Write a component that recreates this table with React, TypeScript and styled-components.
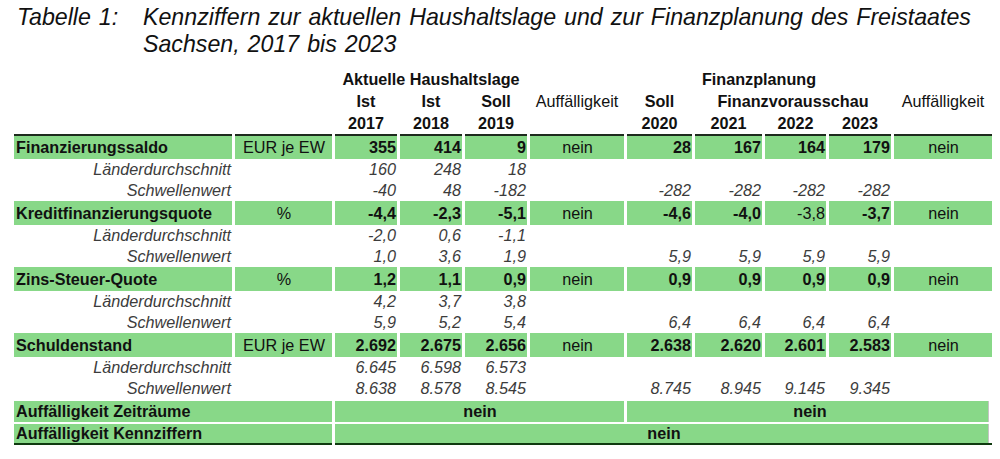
import styled, { createGlobalStyle } from 'styled-components';

const GlobalStyle = createGlobalStyle`
  html, body {
    margin: 0;
    background: #fff;
  }
  body {
    font-family: "Liberation Sans", Arial, sans-serif;
    color: #111;
  }
`;

const GREEN = '#88d888';

type Group = {
  name: string;
  unit: string;
  actual: string[];
  plan: string[];
  thinPlan?: number[];
  avg: string[];
  limit: string[];
  limitPlan: string[];
};

const groups: Group[] = [
  {
    name: 'Finanzierungssaldo',
    unit: 'EUR je EW',
    actual: ['355', '414', '9'],
    plan: ['28', '167', '164', '179'],
    avg: ['160', '248', '18'],
    limit: ['-40', '48', '-182'],
    limitPlan: ['-282', '-282', '-282', '-282'],
  },
  {
    name: 'Kreditfinanzierungsquote',
    unit: '%',
    actual: ['-4,4', '-2,3', '-5,1'],
    plan: ['-4,6', '-4,0', '-3,8', '-3,7'],
    thinPlan: [2],
    avg: ['-2,0', '0,6', '-1,1'],
    limit: ['1,0', '3,6', '1,9'],
    limitPlan: ['5,9', '5,9', '5,9', '5,9'],
  },
  {
    name: 'Zins-Steuer-Quote',
    unit: '%',
    actual: ['1,2', '1,1', '0,9'],
    plan: ['0,9', '0,9', '0,9', '0,9'],
    avg: ['4,2', '3,7', '3,8'],
    limit: ['5,9', '5,2', '5,4'],
    limitPlan: ['6,4', '6,4', '6,4', '6,4'],
  },
  {
    name: 'Schuldenstand',
    unit: 'EUR je EW',
    actual: ['2.692', '2.675', '2.656'],
    plan: ['2.638', '2.620', '2.601', '2.583'],
    avg: ['6.645', '6.598', '6.573'],
    limit: ['8.638', '8.578', '8.545'],
    limitPlan: ['8.745', '8.945', '9.145', '9.345'],
  },
];

const colWidths = [218, 97, 62, 62, 62, 94, 65, 67, 61, 62, 98];

const Page = styled.div`
  width: 1000px;
  height: 459px;
  overflow: hidden;
`;

const Title = styled.div`
  display: grid;
  grid-template-columns: 126px 1fr;
  padding: 4px 0 0 17px;
  font-size: 23.2px;
  line-height: 27px;
  word-spacing: 1.5px;
  font-style: italic;
  color: #111;
`;

const Table = styled.table`
  margin: 10px 0 0 11px;
  border-collapse: separate;
  border-spacing: 3px 0;
  table-layout: fixed;
  font-size: 16.2px;
`;

const HeadCell = styled.th<{ $bold?: boolean }>`
  height: 22px;
  padding: 0;
  line-height: 22px;
  text-align: center;
  white-space: nowrap;
  font-weight: ${p => (p.$bold ? 700 : 400)};
  color: #111;
`;

const MainRow = styled.tr<{ $first?: boolean }>`
  td {
    height: ${p => (p.$first ? 23 : 24)}px;
    line-height: ${p => (p.$first ? 23 : 24)}px;
    background: ${GREEN};
    border-top: ${p => (p.$first ? '2px solid #1d2b1d' : 'none')};
  }
`;

const SubRow = styled.tr`
  td {
    height: 21px;
    line-height: 21px;
    font-style: italic;
    color: #3c3c3c;
  }
`;

const SumRow = styled.tr<{ $last?: boolean }>`
  td {
    height: ${p => (p.$last ? 19 : 21)}px;
    line-height: ${p => (p.$last ? 19 : 21)}px;
    background: ${GREEN};
    border-top: 2px solid #fff;
    border-bottom: ${p => (p.$last ? '2px solid #0f3a0f' : 'none')};
    font-weight: 700;
  }
`;

const Cell = styled.td<{ $align?: 'left' | 'right' | 'center'; $bold?: boolean; $edge?: boolean }>`
  padding: 0 1px 0 2px;
  white-space: nowrap;
  text-align: ${p => p.$align ?? 'right'};
  font-weight: ${p => (p.$bold ? 700 : 400)};
  ${p => (p.$edge ? 'box-shadow: inset -3px 0 0 #fff, inset -4px 0 0 #c4c4c4;' : '')}
`;

const SumCell = styled(Cell)`
  && {
    font-weight: 700;
  }
`;

function GroupRows({ g, first }: { g: Group; first: boolean }) {
  return (
    <>
      <MainRow $first={first}>
        <Cell $align="left" $bold>{g.name}</Cell>
        <Cell $align="center">{g.unit}</Cell>
        {g.actual.map((v, i) => (
          <Cell key={i} $bold>{v}</Cell>
        ))}
        <Cell $align="center">nein</Cell>
        {g.plan.map((v, i) => (
          <Cell key={i} $bold={!g.thinPlan?.includes(i)}>{v}</Cell>
        ))}
        <Cell $align="center">nein</Cell>
      </MainRow>
      <SubRow>
        <Cell>Länderdurchschnitt</Cell>
        <Cell />
        {g.avg.map((v, i) => (
          <Cell key={i}>{v}</Cell>
        ))}
        <Cell />
        <Cell />
        <Cell />
        <Cell />
        <Cell />
        <Cell />
      </SubRow>
      <SubRow>
        <Cell>Schwellenwert</Cell>
        <Cell />
        {g.limit.map((v, i) => (
          <Cell key={i}>{v}</Cell>
        ))}
        <Cell />
        {g.limitPlan.map((v, i) => (
          <Cell key={i}>{v}</Cell>
        ))}
        <Cell />
      </SubRow>
    </>
  );
}

export default function App() {
  return (
    <Page>
      <GlobalStyle />
      <Title>
        <span>Tabelle 1:</span>
        <span>
          Kennziffern zur aktuellen Haushaltslage und zur Finanzplanung des Freistaates Sachsen, 2017 bis 2023
        </span>
      </Title>
      <Table>
        <colgroup>
          {colWidths.map((w, i) => (
            <col key={i} style={{ width: w }} />
          ))}
        </colgroup>
        <thead>
          <tr>
            <HeadCell />
            <HeadCell />
            <HeadCell colSpan={3} $bold>Aktuelle Haushaltslage</HeadCell>
            <HeadCell />
            <HeadCell colSpan={4} $bold>Finanzplanung</HeadCell>
            <HeadCell />
          </tr>
          <tr>
            <HeadCell />
            <HeadCell />
            <HeadCell $bold>Ist</HeadCell>
            <HeadCell $bold>Ist</HeadCell>
            <HeadCell $bold>Soll</HeadCell>
            <HeadCell>Auffälligkeit</HeadCell>
            <HeadCell $bold>Soll</HeadCell>
            <HeadCell colSpan={3} $bold>Finanzvorausschau</HeadCell>
            <HeadCell>Auffälligkeit</HeadCell>
          </tr>
          <tr>
            <HeadCell />
            <HeadCell />
            {['2017', '2018', '2019'].map(y => (
              <HeadCell key={y} $bold>{y}</HeadCell>
            ))}
            <HeadCell />
            {['2020', '2021', '2022', '2023'].map(y => (
              <HeadCell key={y} $bold>{y}</HeadCell>
            ))}
            <HeadCell />
          </tr>
        </thead>
        <tbody>
          {groups.map((g, i) => (
            <GroupRows key={g.name} g={g} first={i === 0} />
          ))}
          <SumRow>
            <SumCell colSpan={2} $align="left">Auffälligkeit Zeiträume</SumCell>
            <SumCell colSpan={4} $align="center">nein</SumCell>
            <SumCell colSpan={5} $align="center" $edge>nein</SumCell>
          </SumRow>
          <SumRow $last>
            <SumCell colSpan={2} $align="left">Auffälligkeit Kennziffern</SumCell>
            <SumCell colSpan={9} $align="center" $edge>nein</SumCell>
          </SumRow>
        </tbody>
      </Table>
    </Page>
  );
}
